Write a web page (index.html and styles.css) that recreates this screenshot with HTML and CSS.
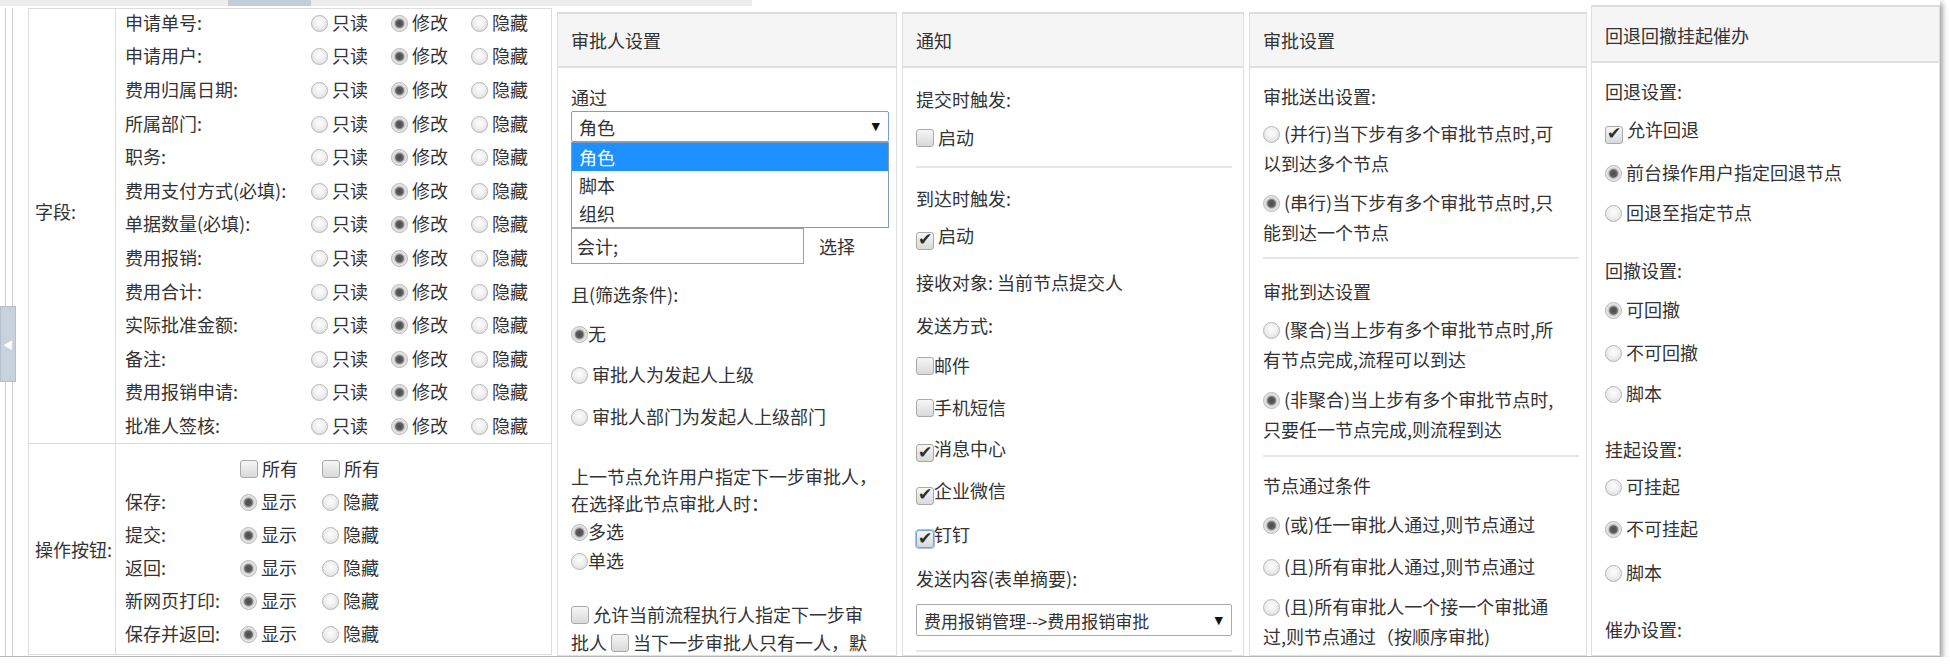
FILE: index.html
```html
<!DOCTYPE html>
<html lang="zh-CN">
<head>
    <meta charset="UTF-8">
    <title>节点设置</title>
    <link rel="stylesheet" href="styles.css">
</head>
<body>

<div class="window">
    <div class="topbar"><span class="thumb"></span></div>

    <div class="main">
        <!-- collapse bar on the left -->
        <div class="splitter"><span class="handle">◀</span></div>

        <table class="fields">
            <tr class="fields-row">
                <td class="cell-label">字段:</td>
                <td class="cell-value">
                    <div class="field-grid">
                        <span>申请单号:</span><label><i class="radio"></i> 只读</label><label><i class="radio on"></i> 修改</label><label><i class="radio"></i> 隐藏</label>
                        <span>申请用户:</span><label><i class="radio"></i> 只读</label><label><i class="radio on"></i> 修改</label><label><i class="radio"></i> 隐藏</label>
                        <span>费用归属日期:</span><label><i class="radio"></i> 只读</label><label><i class="radio on"></i> 修改</label><label><i class="radio"></i> 隐藏</label>
                        <span>所属部门:</span><label><i class="radio"></i> 只读</label><label><i class="radio on"></i> 修改</label><label><i class="radio"></i> 隐藏</label>
                        <span>职务:</span><label><i class="radio"></i> 只读</label><label><i class="radio on"></i> 修改</label><label><i class="radio"></i> 隐藏</label>
                        <span>费用支付方式(必填):</span><label><i class="radio"></i> 只读</label><label><i class="radio on"></i> 修改</label><label><i class="radio"></i> 隐藏</label>
                        <span>单据数量(必填):</span><label><i class="radio"></i> 只读</label><label><i class="radio on"></i> 修改</label><label><i class="radio"></i> 隐藏</label>
                        <span>费用报销:</span><label><i class="radio"></i> 只读</label><label><i class="radio on"></i> 修改</label><label><i class="radio"></i> 隐藏</label>
                        <span>费用合计:</span><label><i class="radio"></i> 只读</label><label><i class="radio on"></i> 修改</label><label><i class="radio"></i> 隐藏</label>
                        <span>实际批准金额:</span><label><i class="radio"></i> 只读</label><label><i class="radio on"></i> 修改</label><label><i class="radio"></i> 隐藏</label>
                        <span>备注:</span><label><i class="radio"></i> 只读</label><label><i class="radio on"></i> 修改</label><label><i class="radio"></i> 隐藏</label>
                        <span>费用报销申请:</span><label><i class="radio"></i> 只读</label><label><i class="radio on"></i> 修改</label><label><i class="radio"></i> 隐藏</label>
                        <span>批准人签核:</span><label><i class="radio"></i> 只读</label><label><i class="radio on"></i> 修改</label><label><i class="radio"></i> 隐藏</label>
                    </div>
                </td>
            </tr>
            <tr class="buttons-row">
                <td class="cell-label">操作按钮:</td>
                <td class="cell-value">
                    <div class="button-grid">
                        <span></span><label><i class="check"></i> 所有</label><label><i class="check"></i> 所有</label>
                        <span>保存:</span><label><i class="radio on"></i> 显示</label><label><i class="radio"></i> 隐藏</label>
                        <span>提交:</span><label><i class="radio on"></i> 显示</label><label><i class="radio"></i> 隐藏</label>
                        <span>返回:</span><label><i class="radio on"></i> 显示</label><label><i class="radio"></i> 隐藏</label>
                        <span>新网页打印:</span><label><i class="radio on"></i> 显示</label><label><i class="radio"></i> 隐藏</label>
                        <span>保存并返回:</span><label><i class="radio on"></i> 显示</label><label><i class="radio"></i> 隐藏</label>
                    </div>
                </td>
            </tr>
        </table>

        <!-- 审批人设置 -->
        <section class="panel panel-approver">
            <div class="panel-head">审批人设置</div>
            <div class="panel-body">
                <div class="line via">通过</div>
                <div class="select-wrap">
                    <div class="select focused"><span>角色</span><b class="caret">▼</b></div>
                    <ul class="dropdown">
                        <li class="active">角色</li>
                        <li>脚本</li>
                        <li>组织</li>
                    </ul>
                </div>
                <div class="pick-row">
                    <div class="text-input">会计;</div>
                    <span class="pick-link">选择</span>
                </div>
                <div class="line mt-16">且(筛选条件):</div>
                <div class="line mt-11"><i class="radio on"></i>无</div>
                <div class="line mt-13"><i class="radio"></i> 审批人为发起人上级</div>
                <div class="line mt-14"><i class="radio"></i> 审批人部门为发起人上级部门</div>
                <div class="next-step">
                    上一节点允许用户指定下一步审批人，<br>
                    在选择此节点审批人时：
                </div>
                <div class="choice"><i class="radio on"></i>多选</div>
                <div class="choice"><i class="radio"></i>单选</div>
                <div class="assign"><i class="check"></i> 允许当前流程执行人指定下一步审</div>
                <div class="assign-more">批人 <i class="check"></i> 当下一步审批人只有一人，默</div>
            </div>
        </section>

        <!-- 通知 -->
        <section class="panel panel-notify">
            <div class="panel-head">通知</div>
            <div class="panel-body">
                <div class="line mt-17">提交时触发:</div>
                <div class="line mt-10"><i class="check"></i> 启动</div>
                <hr class="sep mt-15">
                <div class="line mt-16">到达时触发:</div>
                <div class="line mt-9"><i class="check on"></i> 启动</div>
                <div class="line mt-18">接收对象: 当前节点提交人</div>
                <div class="line mt-15">发送方式:</div>
                <div class="line mt-12"><i class="check"></i>邮件</div>
                <div class="line mt-14"><i class="check"></i>手机短信</div>
                <div class="line mt-13"><i class="check on"></i>消息中心</div>
                <div class="line mt-14"><i class="check on"></i>企业微信</div>
                <div class="line mt-15"><i class="check on focused"></i>钉钉</div>
                <div class="line mt-16">发送内容(表单摘要):</div>
                <div class="select small"><span>费用报销管理--&gt;费用报销审批</span><b class="caret">▼</b></div>
                <hr class="sep mt-14">
            </div>
        </section>

        <!-- 审批设置 -->
        <section class="panel panel-approve">
            <div class="panel-head">审批设置</div>
            <div class="panel-body">
                <div class="line mt-14">审批送出设置:</div>
                <div class="item mt-8"><i class="radio"></i> (并行)当下步有多个审批节点时,可<br>以到达多个节点</div>
                <div class="item mt-9"><i class="radio on"></i> (串行)当下步有多个审批节点时,只<br>能到达一个节点</div>
                <hr class="sep mt-10">
                <div class="line mt-18">审批到达设置</div>
                <div class="item mt-9"><i class="radio"></i> (聚合)当上步有多个审批节点时,所<br>有节点完成,流程可以到达</div>
                <div class="item mt-10"><i class="radio on"></i> (非聚合)当上步有多个审批节点时,<br>只要任一节点完成,则流程到达</div>
                <hr class="sep mt-11">
                <div class="line mt-14">节点通过条件</div>
                <div class="item mt-10"><i class="radio on"></i> (或)任一审批人通过,则节点通过</div>
                <div class="item mt-12"><i class="radio"></i> (且)所有审批人通过,则节点通过</div>
                <div class="item mt-10"><i class="radio"></i> (且)所有审批人一个接一个审批通<br>过,则节点通过（按顺序审批)</div>
            </div>
        </section>

        <!-- 回退回撤挂起催办 -->
        <section class="panel panel-rollback">
            <div class="panel-head">回退回撤挂起催办</div>
            <div class="panel-body">
                <div class="line mt-14">回退设置:</div>
                <div class="line mt-10"><i class="check on"></i> 允许回退</div>
                <div class="line mt-14"><i class="radio on"></i> 前台操作用户指定回退节点</div>
                <div class="line mt-12"><i class="radio"></i> 回退至指定节点</div>
                <div class="line mt-30">回撤设置:</div>
                <div class="line mt-11"><i class="radio on"></i> 可回撤</div>
                <div class="line mt-15"><i class="radio"></i> 不可回撤</div>
                <div class="line mt-13"><i class="radio"></i> 脚本</div>
                <div class="line mt-28">挂起设置:</div>
                <div class="line mt-9"><i class="radio"></i> 可挂起</div>
                <div class="line mt-14"><i class="radio on"></i> 不可挂起</div>
                <div class="line mt-16"><i class="radio"></i> 脚本</div>
                <div class="line mt-29">催办设置:</div>
            </div>
        </section>
    </div>
</div>

</body>
</html>
```

FILE: styles.css
```css
body {
    margin: 0;
    background: #fff;
    color: #333;
    font-family: "Noto Sans CJK SC", "Noto Sans", sans-serif;
    font-size: 18px;
}
ul {
    margin: 0;
    padding: 0;
    list-style: none;
}

/* outer window with the drop shadow */
.window {
    width: 1940px;
    height: 656px;
    overflow: hidden;
    border-bottom: 1px solid #b8b8b8;
    box-shadow: 2px 3px 6px rgba(0, 0, 0, 0.45);
}
.topbar {
    width: 752px;
    height: 6px;
    background: #ececec;
    display: flex;
}
.thumb {
    width: 83px;
    margin-left: 228px;
    background: #c3cdd8;
}
.main {
    display: flex;
    height: 650px;
}

/* left collapse bar */
.splitter {
    position: relative;
    width: 6px;
    margin: 2px 0 0 5px;
    border-left: 1px solid #cfcfcf;
    border-right: 1px solid #cfcfcf;
}
.handle {
    position: absolute;
    left: -6px;
    top: 298px;
    width: 14px;
    height: 74px;
    background: #c8d2dd;
    border: 1px solid #b3bfcc;
    color: #fff;
    font-size: 10px;
    display: flex;
    align-items: center;
    justify-content: center;
}

/* fields table */
.fields {
    margin: 2px 0 0 15px;
    width: 525px;
    height: 647px;
    border-collapse: collapse;
    border: 1px solid #dcdcdc;
}
.fields td {
    border: 1px solid #dcdcdc;
    padding: 0;
}
.cell-label {
    width: 82px;
    padding-left: 6px !important;
    vertical-align: middle;
    white-space: nowrap;
}
.fields-row {
    height: 435px;
}
.fields-row .cell-label {
    padding-bottom: 30px !important;
}
.cell-value {
    padding-left: 9px !important;
    vertical-align: top;
}
.field-grid {
    display: grid;
    grid-template-columns: 186px 80px 80px 80px;
    grid-auto-rows: 33.6px;
    align-items: center;
    margin-top: -4px;
    white-space: nowrap;
}
.button-grid {
    display: grid;
    grid-template-columns: 115px 82px 82px;
    grid-auto-rows: 33px;
    align-items: center;
    margin-top: 7px;
    white-space: nowrap;
}

/* radio and checkbox look */
.radio {
    display: inline-block;
    box-sizing: border-box;
    width: 17px;
    height: 17px;
    border-radius: 50%;
    border: 1px solid #b8b8b8;
    background: radial-gradient(circle at 50% 40%, #fdfdfd 0, #f0f0f0 45%, #d4d4d4 100%);
    vertical-align: -2px;
}
.radio.on {
    background: radial-gradient(circle, #4c4c4c 0, #5e5e5e 3.5px, #c4c4c4 5px, #e8e8e8 6.5px, #d2d2d2 100%);
}
.check {
    display: inline-flex;
    align-items: center;
    justify-content: center;
    box-sizing: border-box;
    width: 18px;
    height: 18px;
    border: 1px solid #a9a9a9;
    border-radius: 3px;
    background: linear-gradient(#f6f6f6, #d9d9d9);
    vertical-align: -2px;
    font-style: normal;
    font-size: 17px;
    line-height: 1;
    font-weight: bold;
    color: #2e2e2e;
    font-family: "DejaVu Sans", sans-serif;
}
.check.on::after {
    content: "✔";
    margin-top: -2px;
}
.check.focused {
    border-color: #78a2d8;
    box-shadow: 0 0 0 1px #a9c4e8;
}

/* panels */
.panel {
    flex: none;
    margin: 6px 0 0 5px;
    border: 1px solid #e0e0e0;
    border-top: 2px solid #dcdcdc;
    overflow: hidden;
}
.panel-approver {
    width: 338px;
}
.panel-notify {
    width: 340px;
}
.panel-approve {
    width: 336px;
}
.panel-rollback {
    width: 347px;
    margin-top: -1px;
    margin-left: 4px;
}
.panel-head {
    height: 52px;
    line-height: 52px;
    padding-left: 13px;
    background: #f5f5f5;
    border-bottom: 2px solid #e0e0e0;
}
.panel-rollback .panel-head {
    height: 54px;
    line-height: 56px;
}
.panel-body {
    padding: 0 7px 0 13px;
    white-space: nowrap;
}
.panel-notify .panel-body {
    padding-right: 11px;
}

.line {
    line-height: 28px;
}
.item {
    line-height: 30px;
}
.via {
    margin-top: 15px;
}
.mt-8 { margin-top: 8px; }
.mt-9 { margin-top: 9px; }
.mt-10 { margin-top: 10px; }
.mt-11 { margin-top: 11px; }
.mt-12 { margin-top: 12px; }
.mt-13 { margin-top: 13px; }
.mt-14 { margin-top: 14px; }
.mt-15 { margin-top: 15px; }
.mt-16 { margin-top: 16px; }
.mt-17 { margin-top: 17px; }
.mt-18 { margin-top: 18px; }
.mt-28 { margin-top: 28px; }
.mt-29 { margin-top: 29px; }
.mt-30 { margin-top: 30px; }

.sep {
    margin-bottom: 0;
    border: 0;
    border-top: 2px solid #e6e6e6;
}

/* selects */
.select-wrap {
    position: relative;
}
.select {
    box-sizing: border-box;
    height: 31px;
    display: flex;
    align-items: center;
    justify-content: space-between;
    padding: 0 8px 0 7px;
    border: 1px solid #a9a9a9;
    border-radius: 2px;
    background: #fff;
}
.select.focused {
    border-color: #7b9ed6;
}
.select.small {
    height: 32px;
    margin-top: 12px;
    font-size: 17px;
}
.caret {
    font-size: 11px;
    color: #111;
    font-family: "DejaVu Sans", sans-serif;
}
.dropdown {
    position: absolute;
    top: 100%;
    left: 0;
    right: 0;
    z-index: 2;
    background: #fff;
    border: 1px solid #7f9db9;
}
.dropdown li {
    height: 28px;
    line-height: 28px;
    padding-left: 7px;
}
.dropdown li.active {
    background: #1e90ff;
    color: #fff;
}

.pick-row {
    display: flex;
    align-items: center;
    margin-top: 86px;
}
.text-input {
    box-sizing: border-box;
    width: 233px;
    height: 36px;
    line-height: 34px;
    padding-left: 5px;
    border: 1px solid #a0a0a0;
}
.pick-link {
    margin-left: 15px;
}

.next-step {
    margin-top: 33px;
    line-height: 27px;
}
.choice {
    line-height: 29px;
}
.assign {
    margin-top: 27px;
    line-height: 24px;
}
.assign-more {
    margin-top: 5px;
    line-height: 22px;
}
```
